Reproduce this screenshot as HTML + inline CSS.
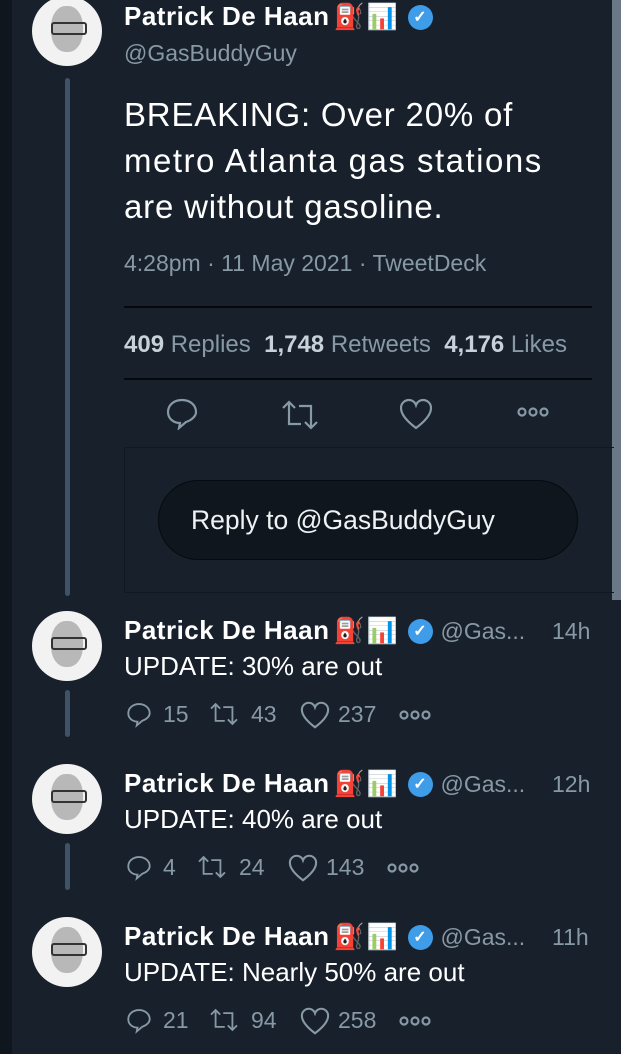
<!DOCTYPE html>
<html><head><meta charset="utf-8"><style>
*{margin:0;padding:0;box-sizing:border-box}
body{width:621px;height:1054px;background:#17202b;position:relative;overflow:hidden;font-family:"Liberation Sans",sans-serif;color:#fff}
.ls{position:absolute;left:0;top:0;width:12px;height:1054px;background:#10161e}
.sb2{position:absolute;left:612px;top:0;width:9px;height:600px;background:#6b7886}
.av{position:absolute;left:32px;width:70px;height:70px;border-radius:50%;background:#f2f2f2;overflow:hidden}
.av::before{content:"";position:absolute;left:19px;top:10px;width:32px;height:46px;border-radius:45%;background:#b8b8b8}
.av::after{content:"";position:absolute;left:19px;top:26px;width:32px;height:9px;border:2px solid #333;border-radius:3px}
.line{position:absolute;left:65px;width:5px;background:#3e5466;border-radius:3px}
.a{position:absolute;white-space:nowrap}
.name{font-weight:bold;font-size:26px;letter-spacing:0.5px}
.g{color:#8899a6}
.hr{position:absolute;left:124px;width:468px;height:2px;background:#05080c}
.ic{position:absolute}
.em{font-size:25px;letter-spacing:2px;margin-left:4px}
.ck{display:inline-block;width:25px;height:25px;border-radius:50%;background:#3e9ce8;color:#fff;font-size:16px;text-align:center;line-height:25px;vertical-align:3px;margin-left:8px}
.n{position:absolute;font-size:23px;color:#8899a6}
</style></head><body>
<div class="ls"></div><div class="sb2"></div>
<div class="av" style="top:-4px"></div>
<div class="line" style="top:78px;height:518px"></div>
<div class="a name" style="left:124px;top:1px">Patrick De Haan<span class="em">⛽📊</span><span class="ck">✓</span></div>
<div class="a g" style="left:124px;top:40px;font-size:23px">@GasBuddyGuy</div>
<div class="a" style="left:124px;top:92px;font-size:33px;letter-spacing:0.8px;line-height:46px">BREAKING: Over 20% of<br><span style="letter-spacing:1.5px">metro Atlanta gas stations</span><br>are without gasoline.</div>
<div class="a g" style="left:124px;top:250px;font-size:23px">4:28pm · 11 May 2021 · TweetDeck</div>
<div class="hr" style="top:306px"></div>
<div class="a g" style="left:124px;top:331px;font-size:24px"><b style="color:#c8d1da">409</b> Replies &nbsp;<b style="color:#c8d1da">1,748</b> Retweets &nbsp;<b style="color:#c8d1da">4,176</b> Likes</div>
<div class="hr" style="top:378px"></div>
<svg class="ic" style="left:165px;top:396px" width="34" height="34" viewBox="0 0 34 34" fill="none" stroke="#8899a6" stroke-width="2.2"><path d="M17 4C9 4 3 9 3 16s6 11 12 11l-1 5 7-6c6-2 10-6 10-10 0-7-6-12-14-12z"/></svg>
<svg class="ic" style="left:280px;top:398px" width="40" height="34" viewBox="0 0 40 34" fill="none" stroke="#8899a6" stroke-width="2.2"><path d="M3 10l6-6 6 6M9 4v22h12M37 24l-6 6-6-6M31 30V8H19"/></svg>
<svg class="ic" style="left:399px;top:398px" width="34" height="32" viewBox="0 0 34 32" fill="none" stroke="#8899a6" stroke-width="2.2"><path d="M17 30C5 21 2 15 2 10c0-5 4-8 8-8 3 0 6 2 7 5 1-3 4-5 7-5 4 0 8 3 8 8 0 5-3 11-15 20z"/></svg>
<svg class="ic" style="left:517px;top:406px" width="32" height="12" viewBox="0 0 32 12" fill="none" stroke="#8899a6" stroke-width="2.2"><circle cx="5" cy="6" r="3.5"/><circle cx="16" cy="6" r="3.5"/><circle cx="27" cy="6" r="3.5"/></svg>
<div class="a" style="left:124px;top:447px;width:490px;height:146px;border:1px solid #111820;border-right:none"></div>
<div class="a" style="left:158px;top:480px;width:420px;height:80px;border-radius:40px;background:#10161d;border:1px solid #070a0e"></div>
<div class="a" style="left:191px;top:505px;font-size:26.5px;color:#eef2f5">Reply to @GasBuddyGuy</div>

<div class="av" style="top:611px"></div>
<div class="line" style="top:690px;height:47px"></div>
<div class="a name" style="left:124px;top:615px">Patrick De Haan<span class="em">⛽📊</span><span class="ck">✓</span> <span class="g" style="font-weight:normal;font-size:23px;letter-spacing:0">@Gas...</span></div>
<div class="a g" style="left:552px;top:618px;font-size:23px">14h</div>
<div class="a" style="left:124px;top:651px;font-size:26px">UPDATE: 30% are out</div>

<div class="av" style="top:764px"></div>
<div class="line" style="top:843px;height:47px"></div>
<div class="a name" style="left:124px;top:768px">Patrick De Haan<span class="em">⛽📊</span><span class="ck">✓</span> <span class="g" style="font-weight:normal;font-size:23px;letter-spacing:0">@Gas...</span></div>
<div class="a g" style="left:552px;top:771px;font-size:23px">12h</div>
<div class="a" style="left:124px;top:804px;font-size:26px">UPDATE: 40% are out</div>

<div class="av" style="top:917px"></div>
<div class="a name" style="left:124px;top:921px">Patrick De Haan<span class="em">⛽📊</span><span class="ck">✓</span> <span class="g" style="font-weight:normal;font-size:23px;letter-spacing:0">@Gas...</span></div>
<div class="a g" style="left:552px;top:924px;font-size:23px">11h</div>
<div class="a" style="left:124px;top:957px;font-size:26px">UPDATE: Nearly 50% are out</div>

<svg class="ic" style="left:126px;top:700px" width="26" height="28" viewBox="0 0 34 34" fill="none" stroke="#8899a6" stroke-width="2.4"><path d="M17 4C9 4 3 9 3 16s6 11 12 11l-1 5 7-6c6-2 10-6 10-10 0-7-6-12-14-12z"/></svg>
<div class="n" style="left:163px;top:701px">15</div>
<svg class="ic" style="left:208px;top:701px" width="32" height="26" viewBox="0 0 40 34" fill="none" stroke="#8899a6" stroke-width="2.4"><path d="M3 10l6-6 6 6M9 4v22h12M37 24l-6 6-6-6M31 30V8H19"/></svg>
<div class="n" style="left:251px;top:701px">43</div>
<svg class="ic" style="left:300px;top:701px" width="30" height="28" viewBox="0 0 34 32" fill="none" stroke="#8899a6" stroke-width="2.4"><path d="M17 30C5 21 2 15 2 10c0-5 4-8 8-8 3 0 6 2 7 5 1-3 4-5 7-5 4 0 8 3 8 8 0 5-3 11-15 20z"/></svg>
<div class="n" style="left:338px;top:701px">237</div>
<svg class="ic" style="left:399px;top:709px" width="32" height="12" viewBox="0 0 32 12" fill="none" stroke="#8899a6" stroke-width="2.2"><circle cx="5" cy="6" r="3.5"/><circle cx="16" cy="6" r="3.5"/><circle cx="27" cy="6" r="3.5"/></svg>

<svg class="ic" style="left:126px;top:853px" width="26" height="28" viewBox="0 0 34 34" fill="none" stroke="#8899a6" stroke-width="2.4"><path d="M17 4C9 4 3 9 3 16s6 11 12 11l-1 5 7-6c6-2 10-6 10-10 0-7-6-12-14-12z"/></svg>
<div class="n" style="left:163px;top:854px">4</div>
<svg class="ic" style="left:196px;top:854px" width="32" height="26" viewBox="0 0 40 34" fill="none" stroke="#8899a6" stroke-width="2.4"><path d="M3 10l6-6 6 6M9 4v22h12M37 24l-6 6-6-6M31 30V8H19"/></svg>
<div class="n" style="left:239px;top:854px">24</div>
<svg class="ic" style="left:288px;top:854px" width="30" height="28" viewBox="0 0 34 32" fill="none" stroke="#8899a6" stroke-width="2.4"><path d="M17 30C5 21 2 15 2 10c0-5 4-8 8-8 3 0 6 2 7 5 1-3 4-5 7-5 4 0 8 3 8 8 0 5-3 11-15 20z"/></svg>
<div class="n" style="left:326px;top:854px">143</div>
<svg class="ic" style="left:387px;top:862px" width="32" height="12" viewBox="0 0 32 12" fill="none" stroke="#8899a6" stroke-width="2.2"><circle cx="5" cy="6" r="3.5"/><circle cx="16" cy="6" r="3.5"/><circle cx="27" cy="6" r="3.5"/></svg>

<svg class="ic" style="left:126px;top:1006px" width="26" height="28" viewBox="0 0 34 34" fill="none" stroke="#8899a6" stroke-width="2.4"><path d="M17 4C9 4 3 9 3 16s6 11 12 11l-1 5 7-6c6-2 10-6 10-10 0-7-6-12-14-12z"/></svg>
<div class="n" style="left:163px;top:1007px">21</div>
<svg class="ic" style="left:208px;top:1007px" width="32" height="26" viewBox="0 0 40 34" fill="none" stroke="#8899a6" stroke-width="2.4"><path d="M3 10l6-6 6 6M9 4v22h12M37 24l-6 6-6-6M31 30V8H19"/></svg>
<div class="n" style="left:251px;top:1007px">94</div>
<svg class="ic" style="left:300px;top:1007px" width="30" height="28" viewBox="0 0 34 32" fill="none" stroke="#8899a6" stroke-width="2.4"><path d="M17 30C5 21 2 15 2 10c0-5 4-8 8-8 3 0 6 2 7 5 1-3 4-5 7-5 4 0 8 3 8 8 0 5-3 11-15 20z"/></svg>
<div class="n" style="left:338px;top:1007px">258</div>
<svg class="ic" style="left:399px;top:1015px" width="32" height="12" viewBox="0 0 32 12" fill="none" stroke="#8899a6" stroke-width="2.2"><circle cx="5" cy="6" r="3.5"/><circle cx="16" cy="6" r="3.5"/><circle cx="27" cy="6" r="3.5"/></svg>
</body></html>
